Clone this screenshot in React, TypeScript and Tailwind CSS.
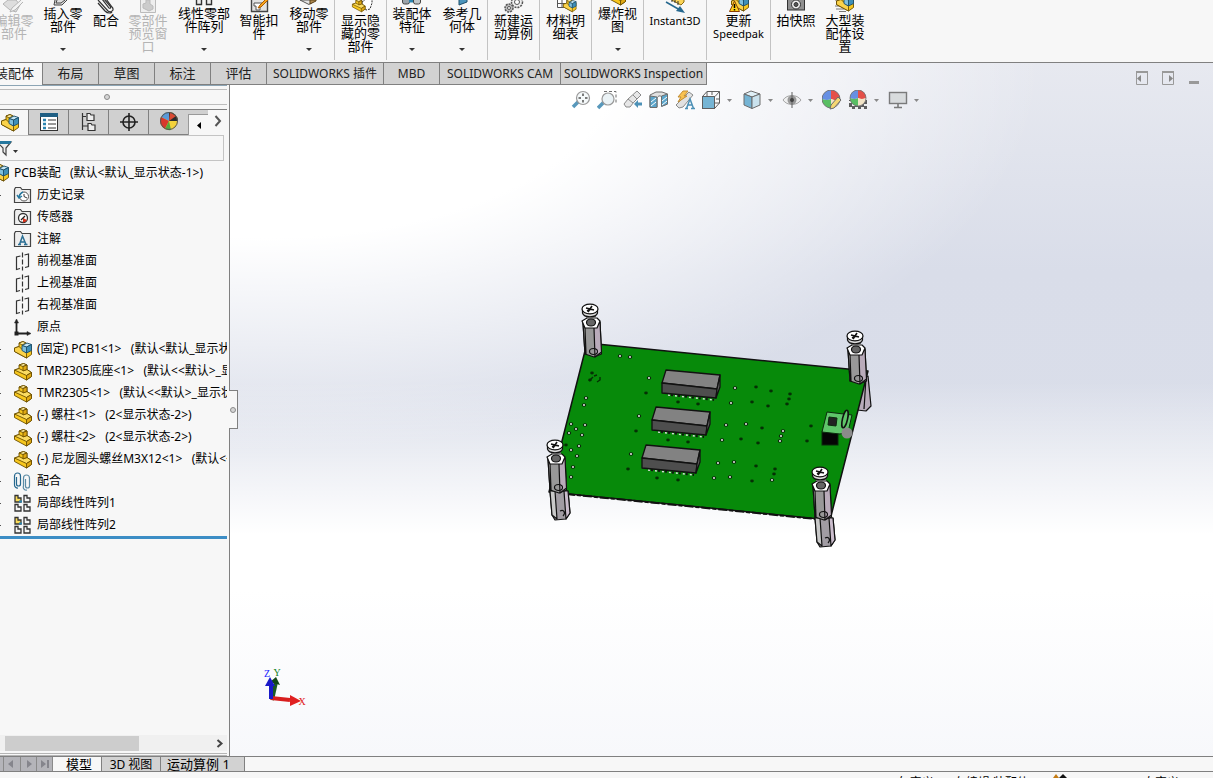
import React, { useState } from 'react';

interface Command {
    id: string;
    lines: string[];
    width: string;
    disabled?: boolean;
    dropdown?: boolean;
}

// Each inner array is one block between two separators
const commandGroups: Command[][] = [
    [
        { id: 'edit', lines: ['编辑零', '部件'], width: 'w-11', disabled: true },
        { id: 'insert', lines: ['插入零', '部件'], width: 'w-[54px]', dropdown: true },
        { id: 'mate', lines: ['配合'], width: 'w-8' },
        { id: 'preview', lines: ['零部件', '预览窗', '口'], width: 'w-[52px]', disabled: true },
        { id: 'pattern', lines: ['线性零部', '件阵列'], width: 'w-[60px]', dropdown: true },
        { id: 'fastener', lines: ['智能扣', '件'], width: 'w-[50px]' },
        { id: 'move', lines: ['移动零', '部件'], width: 'w-[50px]', dropdown: true },
    ],
    [{ id: 'show', lines: ['显示隐', '藏的零', '部件'], width: 'w-[51px]' }],
    [
        { id: 'feature', lines: ['装配体', '特征'], width: 'w-[50px]', dropdown: true },
        { id: 'reference', lines: ['参考几', '何体'], width: 'w-[50px]', dropdown: true },
    ],
    [{ id: 'motion', lines: ['新建运', '动算例'], width: 'w-[51px]' }],
    [{ id: 'bom', lines: ['材料明', '细表'], width: 'w-[51px]' }],
    [{ id: 'explode', lines: ['爆炸视', '图'], width: 'w-[51px]', dropdown: true }],
    [{ id: 'instant', lines: ['Instant3D'], width: 'w-[62px]' }],
    [{ id: 'speedpak', lines: ['更新', 'Speedpak'], width: 'w-[63px]' }],
    [
        { id: 'snapshot', lines: ['拍快照'], width: 'w-[50px]' },
        { id: 'large', lines: ['大型装', '配体设', '置'], width: 'w-12' },
    ],
];

const YellowPart = ({ x = 0, y = 0 }: { x?: number; y?: number }) => (
    <g transform={`translate(${x} ${y})`} stroke="#6b4f00" strokeWidth="0.900" strokeLinejoin="round">
        <path d="M0.500 7 L5 5.500 V2 L9.500 0.500 L13 2 V6.500 L17.500 9.500 V13.500 L12.500 17 L0.500 10.500 Z" fill="#f7c71e" />
        <path d="M0.500 7 L5 5.500 L9 7.500 L13 6.500 L17.500 9.500 L12.500 12.500 Z" fill="#fbdc62" />
        <path d="M5 2 L9.500 0.500 L13 2 L9 3.500 Z" fill="#fdeca0" />
        <path d="M9 3.500 L13 2 V6.500 L9 8 Z" fill="#e0a914" />
        <path d="M12.500 12.500 L17.500 9.500 V13.500 L12.500 17 Z" fill="#e0a914" />
    </g>
);

const Assembly = ({ x = 0, y = 0 }: { x?: number; y?: number }) => (
    <g transform={`translate(${x} ${y})`} stroke="#6b4f00" strokeWidth="0.900" strokeLinejoin="round">
        <path d="M0.500 7 L5 5.500 V2 L9 0.500 L17.500 5 V13.500 L12.500 17 L0.500 10.500 Z" fill="#f7c71e" />
        <path d="M0.500 7 L5 5.500 L12.500 12.500 V17 L0.500 10.500 Z" fill="#fbd34a" />
        <path d="M5 2 L9 0.500 L12 2 L8 4 Z" fill="#fdeca0" />
        <g stroke="#1d4f6b">
            <path d="M8 4.500 L13 2 L17.500 3.500 L12.500 6 Z" fill="#c5e6f5" />
            <path d="M8 4.500 L12.500 6 V12 L8 9.500 Z" fill="#7fc0de" />
            <path d="M12.500 6 L17.500 3.500 V9.500 L12.500 12 Z" fill="#3e8fb8" />
        </g>
    </g>
);

// The drawings start above the top edge, only their lower part is visible
const commandIcons: Record<string, React.ReactNode> = {
    edit: (
        <g fill="#ddd" stroke="#b5b5b5">
            <path d="M2 4 L7 0 H15 L19 5 L15 12 L9 10 Z" />
            <path d="M20 0 L11 8 L9 12 L14 10 L22 2" fill="#f2f2f2" />
        </g>
    ),
    insert: <path d="M5 0 L4 5 H12 L17 0 M7 0 L6 3 H11 L15 0" fill="#ddd" stroke="#444" />,
    mate: (
        <g fill="none" stroke="#333" strokeWidth="1.200">
            <path d="M5 0 L15 11 C18 13 22 10 19 7 L13 -1" />
            <path d="M9 -1 L16 8 C18 9 18 7 17 6 L11 -1 M5 3 L12 11 C15 14 18 13 19 12" />
        </g>
    ),
    preview: (
        <g fill="#eee" stroke="#bbb">
            <path d="M5.500 -2 H20.500 V12.500 H5.500 Z" />
            <path d="M8 4 L11 3 V0 H15 V4 L18 6 V9 L14 11 L8 8 Z" fill="#ccc" />
        </g>
    ),
    pattern: <path d="M5.500 0 V4.500 H10.500 V0 M15.500 0 V4.500 H20.500 V0" fill="#eee" stroke="#333" strokeWidth="1.400" />,
    fastener: (
        <g>
            <path d="M5.500 -2 H21.500 V11.500 H5.500 Z" fill="#e3e3e3" stroke="#444" strokeWidth="1.400" />
            <path d="M8 3 H16 V6 H14 V10 H10 V6 H8 Z" fill="#fff" stroke="#555" />
            <path d="M21 -2 L14 5 L12 8 L15 7 L22 0" fill="#f7a51c" stroke="#b05c00" />
        </g>
    ),
    move: (
        <g strokeLinejoin="round">
            <path d="M4 0 L13 4.500 L17 2 V0 Z" fill="#e4e4e4" stroke="#555" />
            <path d="M14 0 L14 4 L20 1 V0 Z" fill="#b08a4e" stroke="#5b401a" />
        </g>
    ),
    show: (
        <g>
            <path d="M14 2 L17 0 V-2 H24 V3 L22 9 L18 10 L14 7 Z" fill="#fff" stroke="#333" strokeDasharray="2 1" />
            <g transform="translate(4 -1) scale(0.750)">
                <YellowPart />
            </g>
        </g>
    ),
    feature: (
        <g stroke="#444">
            <rect x="3.500" y="-3" width="7" height="7" rx="2" fill="#9ba3a9" />
            <rect x="14.500" y="-3" width="7" height="7" rx="2" fill="#bfc6ca" />
            <path d="M10 1 H14" stroke="#2b84b0" strokeWidth="3" />
        </g>
    ),
    reference: <path d="M10 -2 V5 L18 2 V-2 Z" fill="#4b94bb" stroke="#1c4e6b" />,
    motion: (
        <g fill="#bbb" stroke="#555">
            <circle cx="16" cy="2" r="5.500" fill="#eee" strokeWidth="1.500" strokeDasharray="2 1" />
            <circle cx="16" cy="2" r="2.500" fill="#fff" />
            <circle cx="8" cy="8" r="4" strokeWidth="1.500" strokeDasharray="2 1" />
            <circle cx="8" cy="8" r="1.500" fill="#fff" />
        </g>
    ),
    bom: (
        <g>
            <path d="M4.500 -1 H14 V7.500 H4.500 Z M4.500 3.500 H14 M9 -1 V7" fill="#fff" stroke="#555" />
            <g transform="translate(10 -1) scale(0.750)">
                <Assembly />
            </g>
        </g>
    ),
    explode: <YellowPart x={3} y={-12} />,
    instant: (
        <g>
            <path d="M6 -2 L19 5 L22 2 V-2 Z" fill="#fbd457" stroke="#8a6a10" />
            <path d="M10 2 V-1 M13 3 V0 M16 5 V1" stroke="#333" />
            <path d="M4 2 L18 10" stroke="#26688f" strokeWidth="1.600" />
            <path d="M23 13 L14 11 L18 6 Z" fill="#26688f" />
        </g>
    ),
    speedpak: (
        <g>
            <Assembly x={5} y={-6} />
            <path d="M8.500 1 L13.500 11.500 H3.500 Z" fill="#ffd21c" stroke="#8a3d00" />
            <path d="M8.500 4 V8 M8.500 9 V10.500" stroke="#000" strokeWidth="1.500" />
        </g>
    ),
    snapshot: (
        <g stroke="#333">
            <rect x="4.500" y="-3" width="17" height="13" fill="#8f8f8f" />
            <circle cx="13" cy="4.500" r="4.500" fill="#eee" />
            <circle cx="13" cy="4.500" r="2" fill="#555" />
        </g>
    ),
    large: (
        <g>
            <path d="M3 0 H9 M4 3 H10 M3 6 H9 M4 9 H12 M7 11.500 H14" stroke="#777" />
            <Assembly x={4} y={-6} />
        </g>
    ),
};

const CommandButton = ({ command }: { command: Command }) => (
    <button
        disabled={command.disabled}
        className={`flex h-full shrink-0 flex-col items-center ${command.width} ${command.disabled ? 'text-[#b4b4b4]' : 'text-black'}`}
    >
        <svg
            width="26"
            height={command.dropdown ? 7 : 14}
            className={`shrink-0 overflow-hidden ${command.dropdown ? 'h-[7px]' : 'h-[14px]'}`}
        >
            {commandIcons[command.id]}
        </svg>
        {command.lines.map((line) => (
            <span
                key={line}
                className={`block whitespace-nowrap leading-[13px] ${/^[A-Z]/.test(line) ? 'text-[11px]' : 'text-[13px]'}`}
            >
                {line}
            </span>
        ))}
        {command.dropdown && (
            <svg width="6" height="3" className="mt-auto mb-[9px] shrink-0">
                <path d="M0 0 H6 L3 3 Z" fill="#333" />
            </svg>
        )}
    </button>
);

const managerTabs = [
    { label: '装配体', style: 'w-[42px] justify-end pr-2' },
    { label: '布局', style: 'w-14 justify-center' },
    { label: '草图', style: 'w-14 justify-center' },
    { label: '标注', style: 'w-14 justify-center' },
    { label: '评估', style: 'w-14 justify-center' },
    { label: 'SOLIDWORKS 插件', style: 'w-[117px] justify-center' },
    { label: 'MBD', style: 'w-14 justify-center' },
    { label: 'SOLIDWORKS CAM', style: 'w-[121px] justify-center' },
    { label: 'SOLIDWORKS Inspection', style: 'w-[147px] justify-center border-r' },
];

const folderPath = 'M1.500 3.500 V16.500 H17.500 V3.500 H9 L7.500 1.500 H2.500 Z';

const PlaneIcon = () => (
    <g fill="none" stroke="#333" strokeWidth="1.200">
        <path d="M7.500 4 L3.500 5 V17.500 L7 16.500 M11.500 3 L15.500 2 V14.500 L12 15.500" />
        <path d="M9.500 0.500 V18.500" strokeDasharray="5 2" />
    </g>
);

const PatternIcon = () => (
    <g stroke="#333" strokeWidth="1.300">
        <path d="M2 1.500 H5 V4 H8 V8 H2 Z" fill="#fbdc5a" />
        <path d="M11 1.500 H14 V4 H17 V8 H11 Z M2 10.500 H5 V13 H8 V17 H2 Z M11 10.500 H14 V13 H17 V17 H11 Z" fill="#f4f4f4" />
        <path d="M6 7.500 H9" stroke="#2b84b0" strokeWidth="2" />
    </g>
);

const treeIcons: Record<string, React.ReactNode> = {
    history: (
        <g>
            <path d={folderPath} fill="#eee" stroke="#444" strokeWidth="1.200" />
            <circle cx="11" cy="10.500" r="4.500" fill="#fff" stroke="#555" />
            <path d="M11 8 V10.500 L14 12" fill="none" stroke="#333" />
            <path d="M4 9 L6 12 L9 10 M6 12 C6 9 8 7 10 6" fill="none" stroke="#26789f" strokeWidth="1.400" />
        </g>
    ),
    sensor: (
        <g>
            <path d={folderPath} fill="#eee" stroke="#444" strokeWidth="1.200" />
            <circle cx="10" cy="10" r="4.500" fill="#fff" stroke="#333" strokeWidth="1.300" />
            <path d="M10 10 L14 12 A4.500 4.500 0 0 1 10 14.500 Z" fill="#d9331c" />
            <path d="M8 12 L12 8" stroke="#222" strokeWidth="1.300" />
        </g>
    ),
    note: (
        <g>
            <path d={folderPath} fill="#eee" stroke="#444" strokeWidth="1.200" />
            <path d="M5 14.500 H8 M11 14.500 H14.500 M6.500 14.500 L9.500 6 L13 14.500 M7.500 12 H11.500" fill="none" stroke="#2b6f94" strokeWidth="1.500" />
        </g>
    ),
    plane: <PlaneIcon />,
    origin: (
        <g fill="#222" stroke="#222">
            <path d="M3.500 15 V4 M3 15.500 H15" strokeWidth="1.800" />
            <path d="M1.500 5 L3.500 1 L5.500 5 Z M14 13.500 L18 15.500 L14 17.500 Z" strokeWidth="0.500" />
            <rect x="2" y="14" width="3" height="3" />
        </g>
    ),
    assembly: <Assembly x={1} y={1} />,
    part: <YellowPart x={1} y={1} />,
    mates: (
        <g fill="none" strokeWidth="1.200">
            <path d="M3.500 5 V12 A1.500 1.500 0 0 0 7.500 12 V4 A2.800 2.800 0 0 0 1.500 4 V13 A3 3 0 0 0 5 16" stroke="#26688f" />
            <path d="M12.500 7 V14 A1.500 1.500 0 0 0 16.500 14 V6 A2.800 2.800 0 0 0 10.500 6 V14 A3 3 0 0 0 14 18" stroke="#5b8ba5" />
        </g>
    ),
    pattern: <PatternIcon />,
};

const treeItems = [
    { icon: 'history', label: '历史记录', expandable: true },
    { icon: 'sensor', label: '传感器' },
    { icon: 'note', label: '注解', expandable: true },
    { icon: 'plane', label: '前视基准面' },
    { icon: 'plane', label: '上视基准面' },
    { icon: 'plane', label: '右视基准面' },
    { icon: 'origin', label: '原点' },
    { icon: 'assembly', label: '(固定) PCB1<1>   (默认<默认_显示状态-1>)', expandable: true },
    { icon: 'part', label: 'TMR2305底座<1>   (默认<<默认>_显示状态 1>)', expandable: true },
    { icon: 'part', label: 'TMR2305<1>   (默认<<默认>_显示状态 1>)', expandable: true },
    { icon: 'part', label: '(-) 螺柱<1>   (2<显示状态-2>)', expandable: true },
    { icon: 'part', label: '(-) 螺柱<2>   (2<显示状态-2>)', expandable: true },
    { icon: 'part', label: '(-) 尼龙圆头螺丝M3X12<1>   (默认<<默认>_显示状态 1>)', expandable: true },
    { icon: 'mates', label: '配合', expandable: true },
    { icon: 'pattern', label: '局部线性阵列1', expandable: true },
    { icon: 'pattern', label: '局部线性阵列2', expandable: true },
];

const Ball = ({ cx, cy, r }: { cx: number; cy: number; r: number }) => (
    <g transform={`translate(${cx} ${cy}) scale(${r})`}>
        <circle r="1" fill="#eee" />
        <path d="M0 0 V-1 A1 1 0 0 0 -1 0 C-0.600 0.150 -0.300 0.150 0 0 Z" fill="#4f7fe0" />
        <path d="M0 0 V-1 A1 1 0 0 1 1 0 C0.600 0.200 0.300 0.150 0 0 Z" fill="#e2352b" />
        <path d="M0 0 C-0.300 0.150 -0.600 0.150 -1 0 A1 1 0 0 0 0 1 Z" fill="#3fb54a" />
        <path d="M0 0 C0.300 0.150 0.600 0.200 1 0 A1 1 0 0 1 0 1 Z" fill="#f4e3c0" />
        <circle r="1" fill="none" stroke="#555" strokeWidth="0.100" />
    </g>
);

const PanelTabs = () => (
    <div className="flex h-[26px] border-t border-[#808080] bg-[#d0d0d0]">
        <button aria-label="FeatureManager" className="w-7 bg-[#f7f7f7]">
            <svg width="20" height="20">
                <Assembly x={1} y={1} />
            </svg>
        </button>
        <button aria-label="PropertyManager" className="flex w-10 items-center justify-center border-b border-l border-[#808080]">
            <svg width="20" height="20">
                <rect x="1.500" y="1.500" width="17" height="17" fill="#fff" stroke="#333" />
                <rect x="1" y="1" width="18" height="4" fill="#1f5f84" />
                <path d="M4 8 H7 M4 12 H7 M4 16 H7" stroke="#2b84b0" strokeWidth="2.500" />
                <path d="M9 8 H17 M9 12 H17 M9 16 H17" stroke="#333" />
            </svg>
        </button>
        <button aria-label="ConfigurationManager" className="flex w-10 items-center justify-center border-b border-l border-[#808080]">
            <svg width="20" height="20" fill="#eee" stroke="#333" strokeWidth="1.200">
                <path d="M3.500 1 V18 M3.500 4.500 H7 M3.500 14 H9" fill="none" />
                <path d="M8 1.500 H11 L12 3 H15 V8.500 H8 Z" />
                <path d="M9 11.500 H12 L13 13 H16 V18.500 H9 Z" />
            </svg>
        </button>
        <button aria-label="DimXpertManager" className="flex w-10 items-center justify-center border-b border-l border-[#808080]">
            <svg width="20" height="20" fill="none" stroke="#222" strokeWidth="1.600">
                <circle cx="10" cy="10" r="6" />
                <path d="M10 1 V19 M1 10 H19" />
            </svg>
        </button>
        <button aria-label="DisplayManager" className="flex w-10 items-center justify-center border-b border-l border-[#808080]">
            <svg width="20" height="20">
                <circle cx="10" cy="9" r="9" fill="#f3d23b" />
                <path d="M10 9 L2 5 A9 9 0 0 1 10 0 Z" fill="#5a9ad8" />
                <path d="M10 9 V0 A9 9 0 0 1 19 9 Z" fill="#2b2b2b" />
                <path d="M10 9 L11 0 L17 4 Z" fill="#d94a33" />
                <path d="M10 9 L2 5 A9 9 0 0 0 6 17 Z" fill="#d8392c" />
                <path d="M10 9 L6 17 A9 9 0 0 0 12 18 Z" fill="#55a83c" />
                <circle cx="10" cy="9" r="8.500" fill="none" stroke="#555" />
            </svg>
        </button>
        <button aria-label="向左滚动" className="mt-1 flex w-5 items-center justify-center border-t border-l border-[#999] bg-[#f7f7f7]">
            <svg width="4" height="7">
                <path d="M4 0 V7 L0 3.500 Z" />
            </svg>
        </button>
        <button aria-label="向右滚动" className="flex flex-1 items-center justify-center bg-[#f7f7f7] pb-1">
            <svg width="8" height="12" fill="none" stroke="#555" strokeWidth="2">
                <path d="M1.500 1 L6 6 L1.500 11" />
            </svg>
        </button>
    </div>
);

const FeaturePanel = () => {
    const [filter, setFilter] = useState('');

    return (
        <aside className="relative flex w-[230px] shrink-0 flex-col border-r border-[#808080] bg-[#f7f7f7] pr-[2px]">
            <div className="h-1 border-t border-[#8ca5b5]" />
            <div className="flex h-4 items-center justify-center border-y border-[#bdbdbd] pr-[14px]">
                <span className="size-[6px] rounded-full border border-[#8a8a8a] bg-[#d5d5d5]" />
            </div>
            <div className="h-1" />
            <PanelTabs />
            <label className="mr-[3px] flex h-[26px] items-center border border-l-0 border-[#c4c4c4]">
                <svg width="19" height="20" className="shrink-0">
                    <path d="M-3 4 H11 L6 10 V17 L3 14 V10 Z" fill="#eee" stroke="#444" strokeWidth="1.200" />
                    <path d="M-3 3 H11.500 L10 6 H-3 Z" fill="#26789f" />
                    <path d="M13 12 H18 L15.500 15 Z" fill="#333" />
                </svg>
                <input
                    aria-label="过滤器"
                    value={filter}
                    onChange={(e) => setFilter(e.target.value)}
                    className="h-5 min-w-0 flex-1 bg-transparent px-1 text-xs outline-none"
                />
            </label>
            <div className="overflow-hidden pt-px text-xs text-black">
                <div className="flex h-[22px] items-center whitespace-pre">
                    <svg width="14" height="20" className="shrink-0">
                        <Assembly x={-9} y={1} />
                    </svg>
                    PCB装配   (默认&lt;默认_显示状态-1&gt;)
                </div>
                <ul>
                    {treeItems.map((item) => (
                        <li key={item.label} className="flex h-[22px] items-center whitespace-pre">
                            <span className={`mr-3 h-px w-[1px] shrink-0 ${item.expandable ? 'bg-[#555]' : ''}`} />
                            <svg width="19" height="19" className="mr-[5px] shrink-0">
                                {treeIcons[item.icon]}
                            </svg>
                            {item.label}
                        </li>
                    ))}
                </ul>
            </div>
            <div className="h-[3px] bg-[#3c8dc5]" />
            <div className="mt-auto flex h-4 items-center bg-[#f0f0f0] pl-[5px]">
                <div className="h-[15px] w-[134px] bg-[#cdcdcd]" />
                <button aria-label="滚动" className="mr-[3px] ml-auto">
                    <svg width="8" height="9" fill="none" stroke="#444" strokeWidth="2">
                        <path d="M1.500 1 L5.500 4.500 L1.500 8" />
                    </svg>
                </button>
            </div>
            <div className="mt-[2px] h-[3px] border-y border-[#b5b5b5]" />

            {/* Grip that collapses the panel */}
            <button
                aria-label="折叠面板"
                className="absolute top-[305px] -right-[9px] flex h-[39px] w-[9px] items-center justify-center border border-l-0 border-[#808080] bg-[#f7f7f7]"
            >
                <span className="size-[6px] rounded-full border border-[#8a8a8a] bg-[#d5d5d5]" />
            </button>
        </aside>
    );
};

const viewTools: { id: string; gap: string; dropdown?: boolean; icon: React.ReactNode }[] = [
    {
        id: '整屏显示全图',
        gap: 'mr-[6px]',
        icon: (
            <g>
                <path d="M2 17 L8 11" stroke="#3c87b0" strokeWidth="3.500" />
                <circle cx="12" cy="8" r="6.500" fill="#f4f8fa" stroke="#888" strokeWidth="1.200" />
                <path d="M12 3.500 V6 M12 10 V12.500 M7.500 8 H10 M14 8 H16.500" stroke="#333" strokeWidth="1.500" />
            </g>
        ),
    },
    {
        id: '局部放大',
        gap: 'mr-[6px]',
        icon: (
            <g>
                <path d="M7 1.500 H19 V13" fill="none" stroke="#555" strokeDasharray="3 2" />
                <path d="M1 18 L7 12" stroke="#3c87b0" strokeWidth="3.500" />
                <circle cx="11" cy="9" r="6" fill="#e8f1f5" stroke="#888" strokeWidth="1.200" />
            </g>
        ),
    },
    {
        id: '上一视图',
        gap: 'mr-[6px]',
        icon: (
            <g>
                <path d="M1 14 L5 9 L14 1 L18 5 L11 12 L7 17 L3 17 Z" fill="#e3e3e3" stroke="#777" />
                <path d="M5 9 L10 13 M10 5 L14 9" stroke="#777" />
                <path d="M19 14 H14" stroke="#2f7fab" strokeWidth="3" />
                <path d="M15 10 L11 14 L15 18 Z" fill="#2f7fab" />
            </g>
        ),
    },
    {
        id: '剖面视图',
        gap: 'mr-[6px]',
        icon: (
            <g stroke="#555">
                <path d="M1 5 L7 2 H13 L18.500 4 V14 L13 16 V7 C11 5 9 6 8 8 V17 L1 17 Z" fill="#ddd" />
                <path d="M1 6 L8 7 V17.500 H1 Z M12.500 6 L18.500 4 V14 L12.500 16.500 Z" fill="#3f97c3" />
                <path d="M2 12 L7 8 M2 16 L7 12 M13 11 L18 7 M13 15 L18 11" stroke="#fff" />
            </g>
        ),
    },
    {
        id: '动态注解视图',
        gap: 'mr-[6px]',
        icon: (
            <g>
                <path d="M1 15 L14 2 L18 5 L8 17 L4 18 Z" fill="#ddd" stroke="#777" />
                <path d="M8 1 H13 L9 6 H12 L3 12 L6 7 H3 Z" fill="#f9b934" stroke="#b97a10" />
                <path d="M10 18.500 H13 M16 18.500 H20 M11.500 18.500 L15 9 L18.500 18.500 M12.500 15 H17" fill="none" stroke="#2f7fab" strokeWidth="1.500" />
            </g>
        ),
    },
    {
        id: '视图定向',
        gap: 'mr-[10px]',
        dropdown: true,
        icon: (
            <g stroke="#444">
                <path d="M6 6 V1.500 H18.500 V13 H14 M1.500 6.500 L6 1.500 M14 6.500 L18.500 1.500 M14 18 L18.500 13 M11 1 V5 M15 9 H18" fill="none" />
                <rect x="1.500" y="6.500" width="12" height="12" fill="#5fa9ce" />
            </g>
        ),
    },
    {
        id: '显示样式',
        gap: 'mr-[9px]',
        dropdown: true,
        icon: (
            <g stroke="#555">
                <path d="M2 4 L9 1 L18 4 L10 7 Z" fill="#dceff7" />
                <path d="M2 4 L10 7 V18.500 L2 15 Z" fill="#5fa9ce" />
                <path d="M10 7 L18 4 V15 L10 18.500 Z" fill="#c3dfec" />
            </g>
        ),
    },
    {
        id: '隐藏/显示项目',
        gap: 'mr-[9px]',
        dropdown: true,
        icon: (
            <g>
                <path d="M1 10 C5 4 15 4 19 10 C15 16 5 16 1 10 Z" fill="#eee" stroke="#999" />
                <circle cx="10" cy="10" r="4.500" fill="#888" />
                <path d="M10 2 V18" stroke="#444" />
                <circle cx="10" cy="10" r="2" fill="#222" />
            </g>
        ),
    },
    {
        id: '编辑外观',
        gap: 'mr-[6px]',
        icon: (
            <g>
                <Ball cx={9} cy={9} r={9} />
                <path d="M8 19 L9 15 L16 7 L19 10 L12 18 Z" fill="#f8d35a" stroke="#555" />
            </g>
        ),
    },
    {
        id: '应用布景',
        gap: 'mr-[9px]',
        dropdown: true,
        icon: (
            <g>
                <rect x="1" y="10" width="18" height="9" fill="#444" />
                <path d="M1 12 H19 M4 15 H19 M1 18 H19" stroke="#eee" strokeWidth="2" strokeDasharray="3 3" />
                <Ball cx={10} cy={8} r={8} />
            </g>
        ),
    },
    {
        id: '视图设置',
        gap: '',
        dropdown: true,
        icon: (
            <g stroke="#666">
                <rect x="1.500" y="2.500" width="17" height="11" fill="#d5d8da" strokeWidth="1.400" />
                <path d="M10 14 V17 M6 17.500 H14" strokeWidth="1.600" />
            </g>
        ),
    },
];

// Screw plus the hexagonal pillar under it, drawn around the screw's centre
const Standoff = ({ x, y }: { x: number; y: number }) => (
    <g transform={`translate(${x} ${y})`} stroke="#111" strokeWidth="1.200" strokeLinejoin="round">
        <path d="M-7 13 L-5 44 L4 47 L11.500 44 L10 12 Z" fill="#989898" />
        <path d="M-7 13 L-5 18 L-4 44 L-5 44 Z" fill="#ccc" />
        <path d="M4 18 L10 12 L11.500 42 L5 47 Z" fill="#b9abba" />
        <path d="M-8 11 L-3 8 H7 L10 11 L7 18 L-5 18 Z" fill="#fff" />
        <ellipse cx="1" cy="12.500" rx="4.500" ry="3.500" fill="#666" />
        <ellipse cx="3.500" cy="41.500" rx="4" ry="3" fill="none" />
        <path d="M-4 5 H6 V8 H-4 Z" fill="#777" stroke="none" />
        <path d="M-7.500 -1 V3 C-6 8 6 8 7.500 3 V-1 Z" fill="#ddd" />
        <ellipse cx="0" cy="-1" rx="8" ry="4.800" fill="#fff" />
        <path d="M-4 -2 L4 0 M2 -4 L-2 2 M-3 1 L1 -1" strokeWidth="1.600" />
    </g>
);

const LowerPillar = ({ x, y }: { x: number; y: number }) => (
    <g transform={`translate(${x} ${y})`} stroke="#111" strokeWidth="1.200" strokeLinejoin="round">
        <path d="M0 0 H18 L20 22 L16 28 L5 29 L2 24 Z" fill="#a19ca3" />
        <path d="M0 0 H5 L7 28 L2 24 Z" fill="#c9c9c9" />
        <path d="M14 0 H18 L20 22 L16 28 Z" fill="#cbbdcd" />
        <path d="M10 20 C14 18 16 22 13 25" fill="none" />
    </g>
);

const chipOffsets = [[0, 0], [-10, 37], [-20, 75]];

const darkHoles = [
    [646, 393], [678, 402], [698, 404], [636, 431], [668, 440], [688, 442], [628, 469], [657, 478], [678, 480],
    [756, 387], [771, 391], [790, 394], [789, 399], [787, 404], [752, 402], [768, 406], [762, 428], [741, 439],
    [758, 443], [811, 426], [807, 441], [756, 466], [775, 469], [774, 474], [752, 481], [592, 373], [590, 380], [566, 445],
];

const lightHoles = [
    [620, 356], [630, 357], [649, 378], [639, 416], [631, 454], [735, 388], [731, 403], [726, 425], [746, 424],
    [722, 440], [783, 431], [781, 436], [780, 441], [718, 463], [734, 462], [714, 478], [730, 477], [772, 480],
    [586, 398], [584, 405], [571, 424], [576, 429], [585, 425], [569, 433], [582, 435], [579, 446], [571, 450],
    [577, 456], [573, 467], [571, 477],
];

const Model = () => (
    <svg viewBox="230 85 983 671" className="absolute inset-0 size-full">
        <g stroke="#111" strokeWidth="1.200" strokeLinejoin="round">
            <path d="M862 378 L868 376 L871 406 L866 411 L857 410 Z" fill="#b9abba" />
            <path d="M866 378 L864 409" fill="none" />
            <path d="M587 343 L868 371 L830 520 L549 492 Z" fill="#078a0a" strokeWidth="1.500" />
            <path d="M566 494 L826 520" strokeWidth="2" strokeDasharray="9 2 4 2" />
        </g>

        {darkHoles.map(([x, y]) => (
            <ellipse key={`${x}-${y}`} cx={x} cy={y} rx="1.800" ry="1.400" fill="#052f05" />
        ))}
        {lightHoles.map(([x, y]) => (
            <g key={`${x}-${y}`}>
                <ellipse cx={x} cy={y} rx="2.200" ry="1.800" fill="#0c240c" />
                <circle cx={x} cy={y} r="0.900" fill="#fff" />
            </g>
        ))}
        <path d="M594 376 L597 375 M600 377 V380 L597 382 M589 381 L593 377" fill="none" stroke="#052f05" strokeWidth="1.400" />

        {chipOffsets.map(([x, y]) => (
            <g key={y} transform={`translate(${x} ${y})`} stroke="#111" strokeWidth="1.300" strokeLinejoin="round">
                <path d="M668 395 L714 400" stroke="#ddd" strokeWidth="1.500" strokeDasharray="2 5" />
                <path d="M671 395 L714 400" strokeWidth="2" strokeDasharray="2 5" />
                <path d="M666 370 L720 375 L717 389 L662 383 Z" fill="#828282" />
                <path d="M662 383 L717 389 L716 398 L662 393 Z" fill="#4e4e4e" />
                <path d="M720 375 V387 L716 398 L717 389 Z" fill="#606060" />
            </g>
        ))}

        <g stroke="#0a2a0c">
            <rect x="822" y="432" width="16" height="13" fill="#050505" />
            <path d="M827 412 L852 415 L848 432 L840 434 L822 432 Z" fill="#5fc56a" />
            <path d="M829 417 L837 418 L836 426 L828 425 Z" fill="#222" />
            <circle cx="847" cy="433" r="5.500" fill="#8b8b8b" stroke="none" />
            <ellipse cx="845" cy="419" rx="2.500" ry="9" fill="#5fc56a" stroke="#111" strokeWidth="1.600" transform="rotate(13 845 419)" />
        </g>

        <LowerPillar x={550} y={491} />
        <LowerPillar x={815} y={518} />
        <Standoff x={590} y={310} />
        <Standoff x={855} y={337} />
        <Standoff x={555} y={446} />
        <Standoff x={820} y={473} />

        {/* Axis triad */}
        <path d="M272 700 L276 682" stroke="#1c5a22" strokeWidth="4" />
        <path d="M270 682 L276 677 L280 685 Z" fill="#124717" />
        <path d="M271 698 L290 700" stroke="#d81e1e" strokeWidth="4" />
        <path d="M290 695 L301 701 L290 706 Z" fill="#e02020" />
        <path d="M271 699 V684" stroke="#1a1ac8" strokeWidth="4" />
        <path d="M265 686 L270 677 L275 686 Z" fill="#1a1ac8" />
        <g className="font-['Liberation_Serif',serif] text-[10px]" textAnchor="middle">
            <text x="267" y="677" fill="#1a1aff">Z</text>
            <text x="277" y="676" fill="#11801a">Y</text>
            <text x="302" y="705" fill="#e02020">X</text>
        </g>
    </svg>
);

const Viewport = () => (
    <main className="relative min-w-0 flex-1">
        <Model />
        <div className="relative flex pt-[5px] pl-[341px]">
            {viewTools.map((tool) => (
                <button key={tool.id} aria-label={tool.id} className={`flex shrink-0 items-center ${tool.gap}`}>
                    <svg width="20" height="20" opacity="0.85">{tool.icon}</svg>
                    {tool.dropdown && (
                        <svg width="5" height="3" className="ml-[6px]">
                            <path d="M0 0 H5 L2.500 3 Z" fill="#888" />
                        </svg>
                    )}
                </button>
            ))}
        </div>
    </main>
);

const playerPaths = ['', 'M9 3 V11 L4 7 Z', 'M6 3 V11 L11 7 Z', 'M4 3 V11 L9 7 Z M10 3 H12 V11 H10 Z'];

const App: React.FC = () => {
    const [activeTab, setActiveTab] = useState('装配体');

    return (
        <div className="flex h-screen flex-col overflow-hidden bg-[#f7f7f7] font-['Noto_Sans','Noto_Sans_CJK_SC',sans-serif] text-black">
            {/* Ribbon */}
            <header className="flex h-[63px] shrink-0 overflow-hidden border-b border-[#808080]">
                {commandGroups.map((group, index) => (
                    <div
                        key={group[0].id}
                        className={`flex h-[60px] shrink-0 ${index === 0 ? '-ml-2' : 'border-l border-[#c3c3c3]'}`}
                    >
                        {group.map((command) => (
                            <CommandButton key={command.id} command={command} />
                        ))}
                    </div>
                ))}
            </header>

            <div className="flex min-h-0 flex-1 flex-col bg-[linear-gradient(to_bottom,transparent_46%,#fff_68%,#fff_76%,#f7f8fb_100%),radial-gradient(ellipse_64%_56%_at_22%_0%,#fff_45%,transparent_100%),linear-gradient(to_bottom,#e7e9f0_0%,#d9dde9_30%,#dbdfea_100%)]">
                {/* Command manager tabs */}
                <nav className="flex h-[22px] shrink-0">
                    {managerTabs.map((tab) => (
                        <button
                            key={tab.label}
                            onClick={() => setActiveTab(tab.label)}
                            className={`flex shrink-0 items-center whitespace-nowrap text-[#222] ${tab.style} ${/[A-Z]/.test(tab.label) ? 'text-xs' : 'text-[13px]'} ${
                                tab.label === activeTab ? 'bg-[#f7f7f7]' : 'border-b border-l border-[#808080] bg-[#d2d2d2]'
                            }`}
                        >
                            {tab.label}
                        </button>
                    ))}
                    <div className="mt-[7px] mr-[14px] ml-auto flex h-4 items-center gap-3">
                        <button aria-label="左窗格">
                            <svg width="14" height="14" fill="none" stroke="#999">
                                <path d="M1.500 1 V13.500 H12.500 V1" />
                                <path d="M1 1 H13" strokeWidth="2" />
                                <path d="M6 4 V11 L2 7.500 Z" fill="#888" stroke="none" />
                            </svg>
                        </button>
                        <button aria-label="右窗格">
                            <svg width="14" height="14" fill="none" stroke="#999">
                                <path d="M1.500 1 V13.500 H12.500 V1" />
                                <path d="M1 1 H13" strokeWidth="2" />
                                <path d="M8 4 V11 L12 7.500 Z" fill="#888" stroke="none" />
                            </svg>
                        </button>
                        <button aria-label="最小化" className="mt-2 ml-[2px] h-[3px] w-[10px] bg-[#999]" />
                    </div>
                </nav>

                <div className="flex min-h-0 flex-1">
                    <FeaturePanel />
                    <Viewport />
                </div>
            </div>

            {/* Model / motion study tabs */}
            <div className="flex h-4 shrink-0 overflow-hidden border-y border-[#808080] text-[13px] leading-[12px]">
                {playerPaths.map((path, index) => (
                    <button
                        key={index}
                        aria-label={`标签导航 ${index + 1}`}
                        className={`shrink-0 border-r border-[#8a8a8a] bg-[#b4b4b9] ${index === 0 ? 'w-1' : index === 1 ? 'w-[17px]' : 'w-4'}`}
                    >
                        <svg width="14" height="14">
                            <path d={path} fill="#85858c" />
                        </svg>
                    </button>
                ))}
                <button className="w-12 shrink-0 pl-1">模型</button>
                <button className="w-[59px] shrink-0 border-l border-[#808080] bg-[#d2d2d2]">
                    <span className="text-xs leading-[12px]">3D 视图</span>
                </button>
                <button className="w-[85px] shrink-0 border-x border-[#808080] bg-[#d2d2d2] pr-2">运动算例 1</button>
            </div>

            {/* Status bar */}
            <footer className="flex h-[6px] shrink-0 items-start overflow-hidden pt-1 pr-[34px] text-xs leading-[14px]">
                <span className="ml-auto">欠定义</span>
                <span className="ml-5">在编辑 装配体</span>
                <svg width="14" height="4" className="-mt-[2px] mr-9 ml-6 shrink-0">
                    <path d="M0 4 L3 0 L6 4 Z" fill="#c47a12" />
                    <path d="M6 4 L10 0 L14 4 Z" fill="#111" />
                </svg>
                <span className="ml-10">自定义</span>
            </footer>
        </div>
    );
};

export default App;
